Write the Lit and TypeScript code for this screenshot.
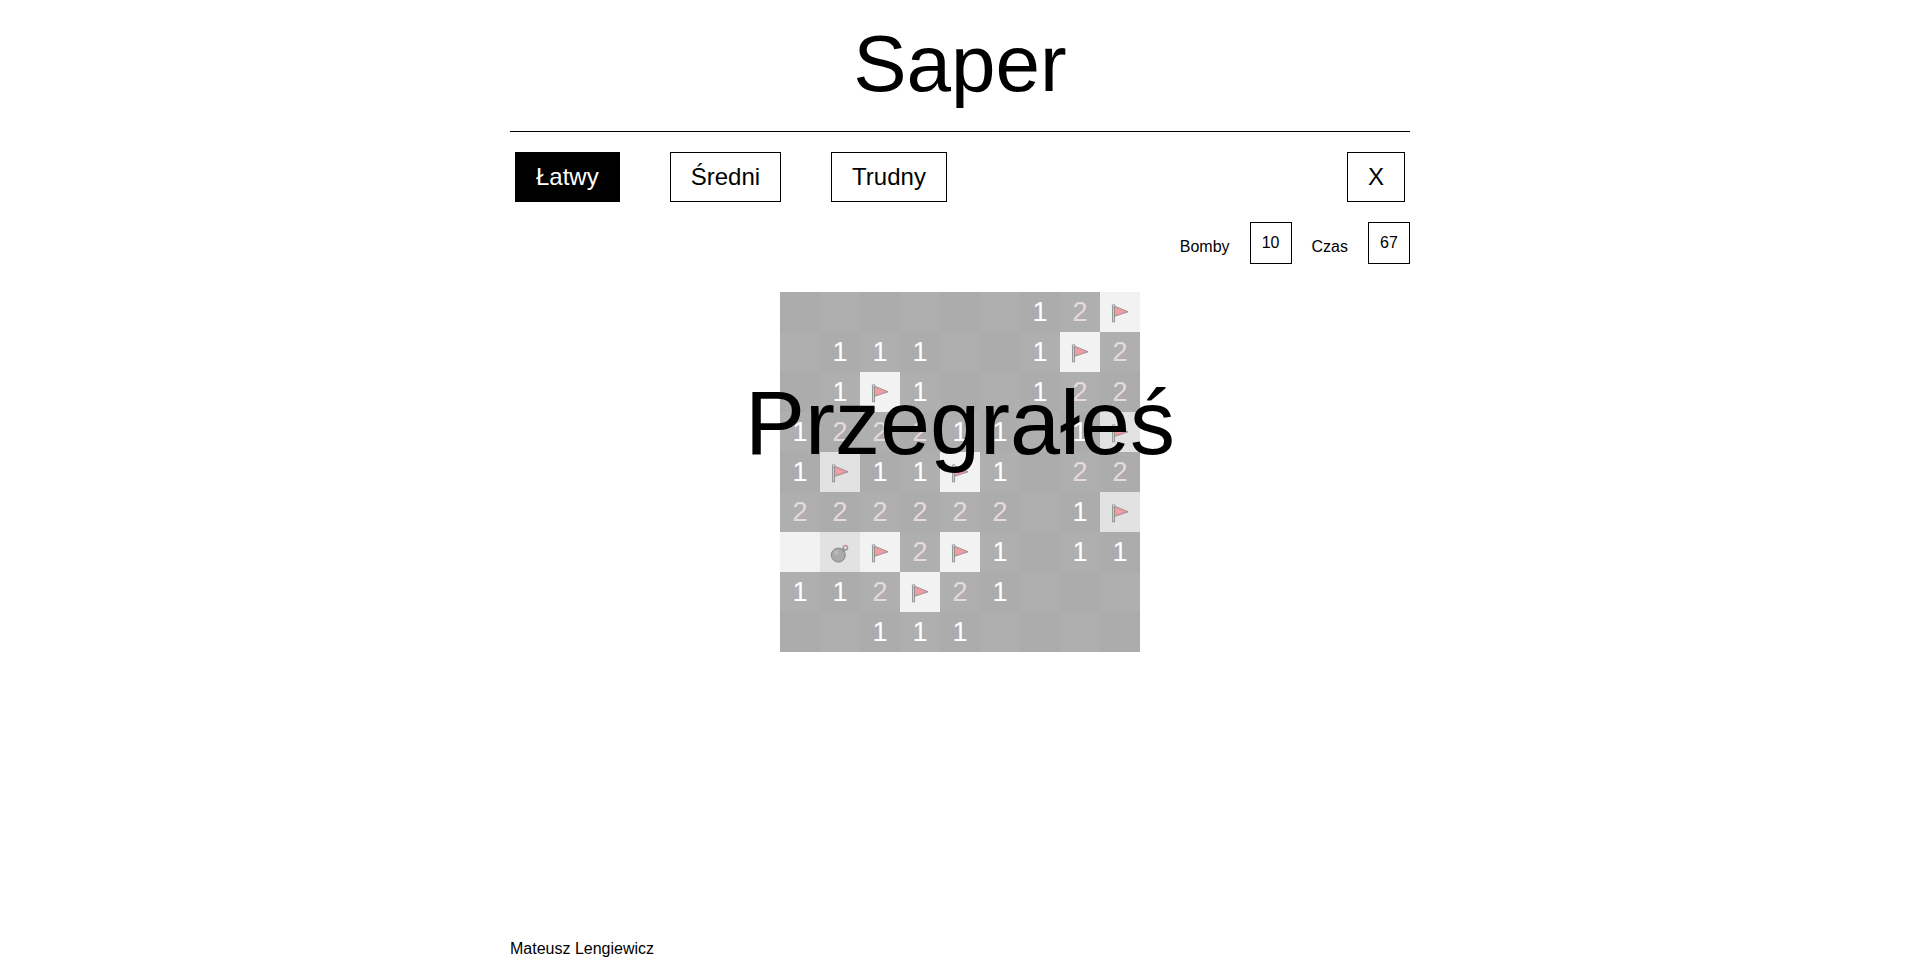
import { LitElement, html, svg, css } from "lit";
import { customElement, property, state } from "lit/decorators.js";
import { classMap } from "lit/directives/class-map.js";

// "." uncovered and empty, "#" covered, "F" flagged, "B" bomb, digits: neighbouring bombs
const FIELD = [
  "......12F",
  ".111..1F2",
  ".1F1..122",
  "122211.1F",
  "1F11F1.22",
  "222222.1F",
  "#BF2F1.11",
  "112F21...",
  "..111....",
];

const flagIcon = svg`
  <path d="M14.4 14.2 L28 19.8 L14.4 24.3 Z" fill="#f59ba6" stroke="#958d8f" stroke-width="1" stroke-linejoin="round"/>
  <rect x="12.6" y="14.6" width="2" height="15.2" fill="#d0d0d0" stroke="#8e8e8e" stroke-width="0.9"/>
  <circle cx="13.6" cy="13.9" r="1.4" fill="#dcdcdc" stroke="#8e8e8e" stroke-width="0.9"/>`;

const bombIcon = svg`
  <path d="M22.2 19.4 L24.2 17.2" stroke="#8f8f8f" stroke-width="3.6"/>
  <circle cx="25.4" cy="15.7" r="2.1" fill="#ece8e8" stroke="#999" stroke-width="1.6"/>
  <path d="M23.3 15.7 A2.1 2.1 0 0 1 27.3 15" fill="none" stroke="#dc9a9e" stroke-width="1.4"/>
  <circle cx="18.3" cy="23.1" r="7" fill="#a9a9a9" stroke="#888" stroke-width="1"/>
  <circle cx="16.3" cy="20.7" r="2.2" fill="#bababa"/>`;

@customElement("saper-cell")
class SaperCell extends LitElement {
  @property() value = ".";
  @property({ type: Boolean }) odd = false;

  static styles = css`
    :host {
      display: block;
    }
    .cell {
      display: block;
      width: 100%;
      height: 40px;
      margin: 0;
      padding: 0;
      border: 0;
      background: #acacac;
      color: #fff;
      font: 27px/40px "Liberation Sans", Arial, sans-serif;
      text-align: center;
    }
    .odd {
      background: #afafaf;
    }
    .covered {
      background: #f2f2f2;
    }
    .covered.odd {
      background: #e2e2e2;
    }
    .two {
      color: #e6dada;
    }
    .icon {
      display: block;
      width: 40px;
      height: 40px;
      margin: 0 auto;
    }
  `;

  render() {
    const v = this.value;
    const classes = {
      cell: true,
      odd: this.odd,
      covered: "#FB".includes(v),
      two: v === "2",
    };
    const content =
      v === "F" || v === "B"
        ? html`<svg class="icon" viewBox="0 0 40 40" aria-hidden="true">
            ${v === "F" ? flagIcon : bombIcon}
          </svg>`
        : "12".includes(v)
          ? v
          : "";
    return html`<button class=${classMap(classes)}>${content}</button>`;
  }
}

@customElement("app-root")
class AppRoot extends LitElement {
  @state() level = "Łatwy";

  static styles = css`
    :host {
      display: block;
      font: 16px/18px "Liberation Sans", Arial, sans-serif;
      color: #000;
      background: #fff;
    }
    .page {
      box-sizing: border-box;
      display: flex;
      flex-direction: column;
      align-items: center;
      min-height: 100vh;
      padding: 18px 0 8px 3px;
    }
    .column {
      width: 100%;
      max-width: 900px;
    }
    .title {
      margin: 0;
      padding-bottom: 22px;
      border-bottom: 1px solid #000;
      font-size: 80px;
      font-weight: 400;
      line-height: 91px;
      text-align: center;
    }
    .toolbar {
      display: flex;
      justify-content: space-between;
      padding: 20px 5px;
    }
    .levels {
      display: flex;
      gap: 50px;
    }
    .button {
      margin: 0;
      padding: 10px 20px;
      border: 1px solid #000;
      border-radius: 0;
      background: #fff;
      color: #000;
      font: 24px/28px "Liberation Sans", Arial, sans-serif;
      cursor: pointer;
    }
    .active {
      background: #000;
      color: #fff;
    }
    .stats {
      display: flex;
      justify-content: flex-end;
      gap: 20px;
    }
    .label {
      padding-top: 16px;
    }
    .value {
      box-sizing: border-box;
      min-width: 42px;
      padding: 10px;
      border: 1px solid #000;
      text-align: center;
      line-height: 20px;
      height: 42px;
    }
    .game {
      position: relative;
      display: flex;
      justify-content: center;
      padding-top: 28px;
    }
    .board {
      display: grid;
      grid-template-columns: repeat(9, 40px);
    }
    .result {
      position: absolute;
      inset: 108px 0 auto;
      margin: 0;
      font-size: 90px;
      line-height: 103px;
      text-align: center;
      pointer-events: none;
    }
    .footer {
      margin-top: auto;
      padding-top: 20px;
    }
  `;

  render() {
    return html`<div class="page">
      <header class="column">
        <h1 class="title">Saper</h1>
        <nav class="toolbar">
          <div class="levels">
            ${["Łatwy", "Średni", "Trudny"].map(
              (name) => html`<button
                class=${classMap({ button: true, active: name === this.level })}
                @click=${() => (this.level = name)}
              >${name}</button>`,
            )}
          </div>
          <button class="button">X</button>
        </nav>
      </header>
      <main class="column">
        <div class="stats">
          <label class="label" for="bombs">Bomby</label>
          <output class="value" id="bombs">10</output>
          <label class="label" for="time">Czas</label>
          <output class="value" id="time">67</output>
        </div>
        <div class="game">
          <div class="board">
            ${FIELD.map((row, y) =>
              [...row].map(
                (v, x) => html`<saper-cell .value=${v} .odd=${(x + y) % 2 === 1}></saper-cell>`,
              ),
            )}
          </div>
          <p class="result">Przegrałeś</p>
        </div>
      </main>
      <footer class="column footer">Mateusz Lengiewicz</footer>
    </div>`;
  }
}
